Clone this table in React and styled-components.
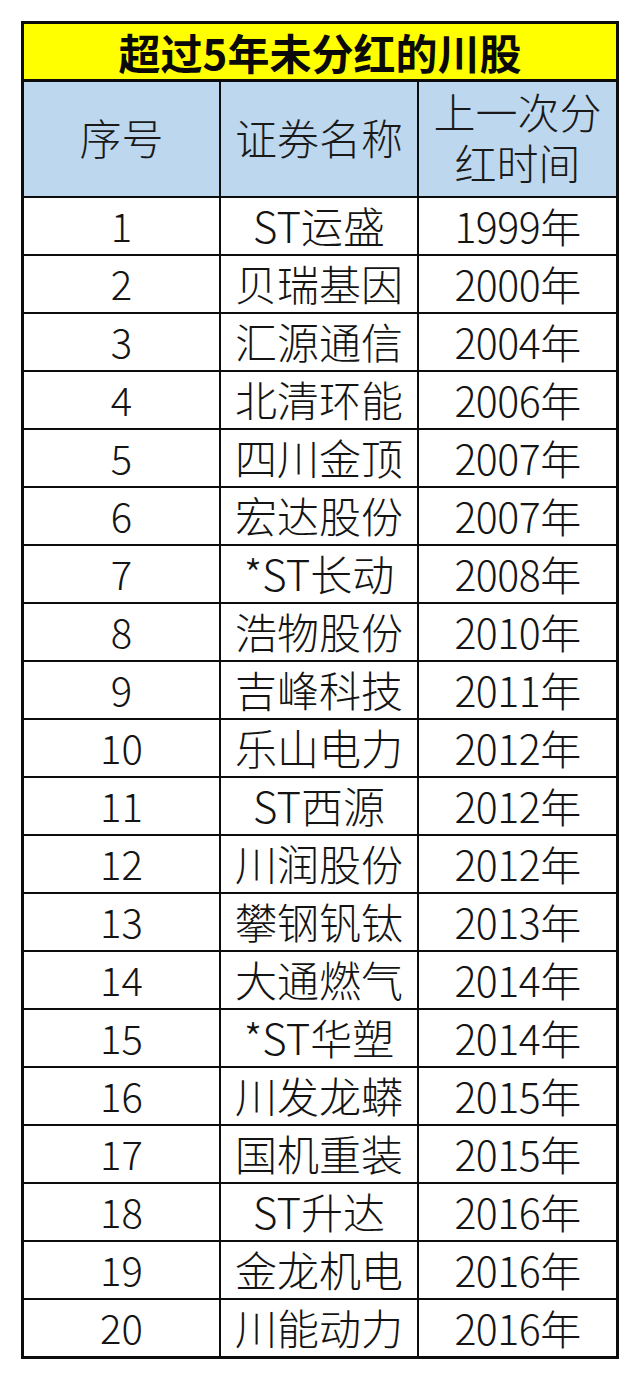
import React from 'react';
import styled, { createGlobalStyle } from 'styled-components';

const GlobalStyle = createGlobalStyle`
  html, body {
    margin: 0;
    padding: 0;
    background: #ffffff;
  }
  body {
    font-family: "Noto Sans CJK SC", "Noto Sans", sans-serif;
    color: #111111;
  }
`;

const Page = styled.div`
  width: 640px;
  height: 1377px;
  padding: 21px 21px 0 21px;
  box-sizing: border-box;
`;

const Table = styled.div`
  display: grid;
  grid-template-columns: 195px 196px 197px;
  grid-auto-rows: 56px;
  gap: 2px;
  background: #0d0d0d;
  border: 3px solid #0d0d0d;
  width: fit-content;
`;

const TitleCell = styled.div`
  grid-column: 1 / -1;
  height: 55px;
  background: #ffff00;
  display: flex;
  align-items: center;
  justify-content: center;
  font-size: 42px;
  font-weight: 700;
  line-height: 1;
  color: #0a0a0a;
`;

const HeadCell = styled.div`
  grid-row: span 2;
  background: #bdd7ee;
  display: flex;
  flex-direction: column;
  align-items: center;
  justify-content: center;
  text-align: center;
  font-size: 42px;
  font-weight: 300;
  line-height: 51px;
  color: #1a1a1a;
  padding-bottom: 6px;
  box-sizing: border-box;
`;

const HeadLine = styled.span`
  display: block;
  height: 51px;
`;

const Cell = styled.div`
  background: #ffffff;
  display: flex;
  align-items: center;
  justify-content: center;
  font-size: ${({ size }) => size || 42}px;
  font-weight: 300;
  line-height: 1;
  color: #141414;
  white-space: nowrap;
  padding-bottom: 2px;
  box-sizing: border-box;
  letter-spacing: ${({ tight }) => (tight ? '-0.5px' : '0')};
`;

const rows = [
  ['ST运盛', '1999'],
  ['贝瑞基因', '2000'],
  ['汇源通信', '2004'],
  ['北清环能', '2006'],
  ['四川金顶', '2007'],
  ['宏达股份', '2007'],
  ['*ST长动', '2008'],
  ['浩物股份', '2010'],
  ['吉峰科技', '2011'],
  ['乐山电力', '2012'],
  ['ST西源', '2012'],
  ['川润股份', '2012'],
  ['攀钢钒钛', '2013'],
  ['大通燃气', '2014'],
  ['*ST华塑', '2014'],
  ['川发龙蟒', '2015'],
  ['国机重装', '2015'],
  ['ST升达', '2016'],
  ['金龙机电', '2016'],
  ['川能动力', '2016'],
];

export default function App() {
  return (
    <Page>
      <GlobalStyle />
      <Table>
        <TitleCell>超过5年未分红的川股</TitleCell>
        <HeadCell>序号</HeadCell>
        <HeadCell>证券名称</HeadCell>
        <HeadCell>
          <HeadLine>上一次分</HeadLine>
          <HeadLine>红时间</HeadLine>
        </HeadCell>
        {rows.map(([name, year], i) => (
          <React.Fragment key={i}>
            <Cell size={40}>{i + 1}</Cell>
            <Cell>{name}</Cell>
            <Cell size={41} tight>
              {year}年
            </Cell>
          </React.Fragment>
        ))}
      </Table>
    </Page>
  );
}
